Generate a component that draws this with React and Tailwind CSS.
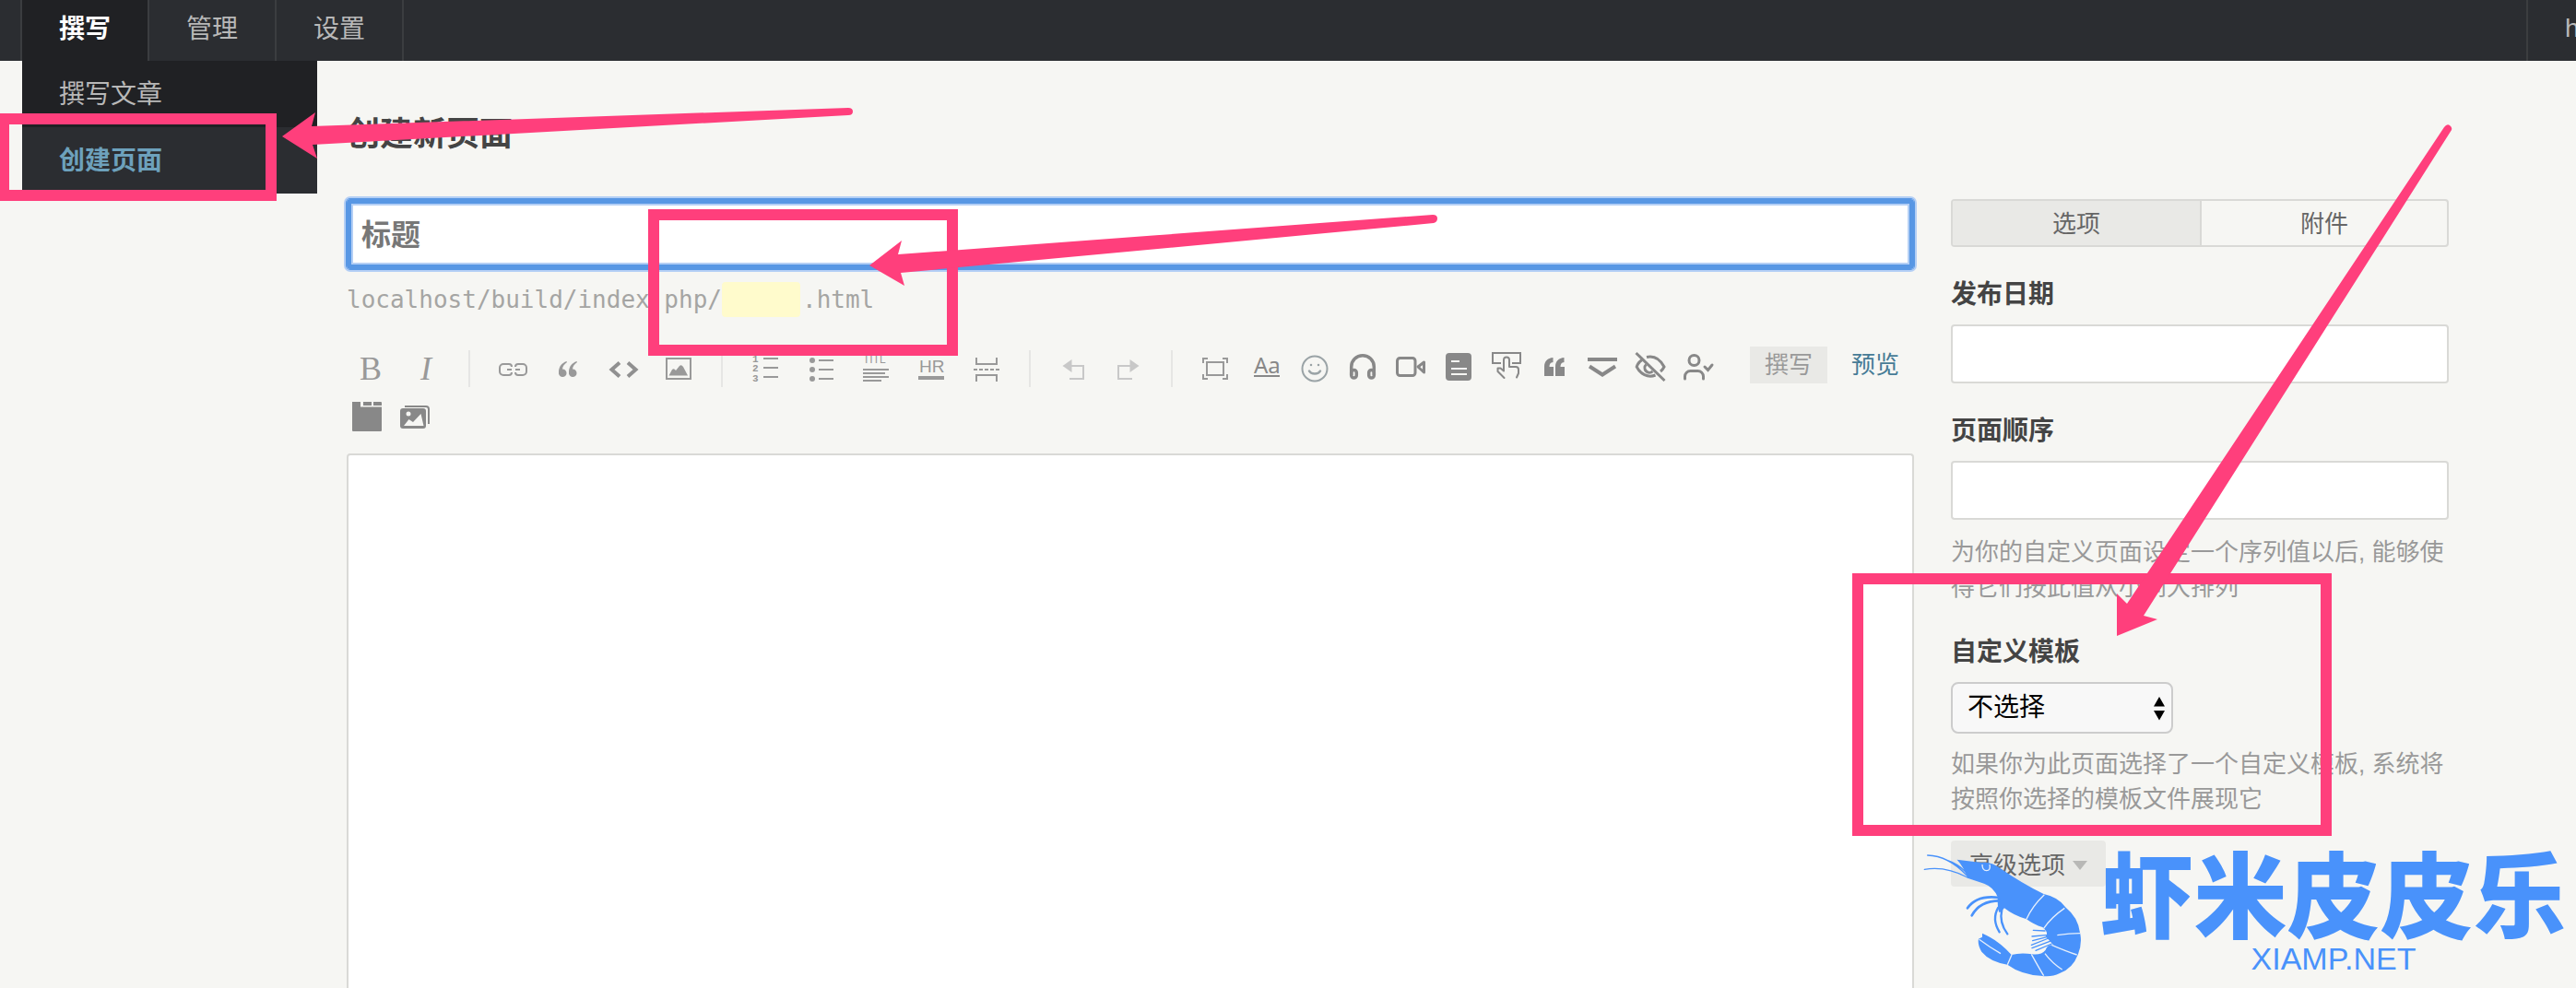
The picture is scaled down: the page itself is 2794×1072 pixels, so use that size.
import React from "react";

const fontBase = "font-['Liberation_Sans','Noto_Sans_CJK_SC',sans-serif]";

function Icon({ children, color = "#888" }) {
  return (
    <svg
      width="32"
      height="32"
      viewBox="0 0 32 32"
      className="overflow-visible"
      fill="none"
      stroke={color}
      strokeWidth="2"
      aria-hidden="true"
    >
      {children}
    </svg>
  );
}

function Tool({ label, wide, children }) {
  return (
    <button
      type="button"
      aria-label={label}
      className={
        (wide ? "w-[60px]" : "w-[52px]") +
        " flex h-[52px] shrink-0 items-center justify-center text-[#999]"
      }
    >
      {children}
    </button>
  );
}

function Spacer() {
  return (
    <span className="flex h-[52px] w-[34px] shrink-0 items-center justify-center">
      <span className="h-10 w-0.5 bg-[#e6e6e4]" />
    </span>
  );
}

function Toolbar() {
  return (
    <div className="-ml-1 flex flex-wrap" role="toolbar" aria-label="编辑工具">
      <Tool label="加粗" wide>
        <span className="font-['Liberation_Serif',serif] text-[36px] leading-none">B</span>
      </Tool>
      <Tool label="斜体" wide>
        <span className="font-['Liberation_Serif',serif] text-[36px] leading-none italic">I</span>
      </Tool>
      <Spacer />
      <Tool label="链接" wide>
        <Icon color="#999">
          <path d="M15 14a3 3 0 0 0-3-3H6a4 4 0 0 0-4 4v4a4 4 0 0 0 4 4h6a3 3 0 0 0 3-3M19 14a3 3 0 0 1 3-3h5a4 4 0 0 1 4 4v4a4 4 0 0 1-4 4h-5a3 3 0 0 1-3-3M10 17h5M19 17h5" />
        </Icon>
      </Tool>
      <Tool label="引用" wide>
        <Icon color="#999">
          <g fill="#999" stroke="none">
            <path d="M6 20C6 14 9 10 14.500 8l.5 1c-3 2-5 5-5 7.500a4.300 4.300 0 1 1-4 3.500z" />
            <path d="M17 20c0-6 3-10 8.500-12l.5 1c-3 2-5 5-5 7.500a4.300 4.300 0 1 1-4 3.500z" />
          </g>
        </Icon>
      </Tool>
      <Tool label="代码" wide>
        <Icon color="#909090">
          <path strokeWidth="4" d="M12 9.500 3.500 17l8.500 7.500M21 9.500l8.500 7.500-8.500 7.500" />
        </Icon>
      </Tool>
      <Tool label="图片" wide>
        <Icon color="#999">
          <path d="M3 5h26v22H3z" />
          <path fill="#999" stroke="none" d="M5.500 23.500 9 17q2-2 4 1l4-5q2-2 4 1l5 9.500z" />
        </Icon>
      </Tool>
      <Spacer />
      <Tool label="数字列表" wide>
        <Icon color="#999">
          <path d="M14 5h16M14 15h16M14 25h16" />
          <g
            fill="#999"
            stroke="none"
            fontSize="11"
            fontWeight="700"
            fontFamily="Liberation Mono, monospace"
          >
            <text x="2" y="9">1</text>
            <text x="2" y="19">2</text>
            <text x="2" y="30">3</text>
          </g>
        </Icon>
      </Tool>
      <Tool label="普通列表" wide>
        <Icon color="#999">
          <path d="M14 7h16M14 17h16M14 27h16" />
          <g fill="#999" stroke="none">
            <circle cx="7" cy="7" r="3" />
            <circle cx="7" cy="17" r="3" />
            <circle cx="7" cy="27" r="3" />
          </g>
        </Icon>
      </Tool>
      <Tool label="标题" wide>
        <Icon color="#999">
          <path d="M2 17h28M2 21h24M2 25h28M2 29h20" />
          <text x="2" y="10" fill="#999" stroke="none" fontSize="12" fontFamily="Liberation Sans, sans-serif">
            TITL
          </text>
        </Icon>
      </Tool>
      <Tool label="分割线" wide>
        <Icon color="#999">
          <text x="3" y="20" fill="#999" stroke="none" fontSize="19" fontFamily="Liberation Sans, sans-serif">
            HR
          </text>
          <path strokeWidth="4" d="M2 26h28" />
        </Icon>
      </Tool>
      <Tool label="摘要分割线" wide>
        <Icon color="#999">
          <path d="M5 4v7h22V4M5 30v-7h22v7" />
          <path strokeDasharray="4 2" d="M2 17h28" />
        </Icon>
      </Tool>
      <Spacer />
      <Tool label="撤销" wide>
        <Icon color="#c8c8c8">
          <path d="M14 13h13v14H12" />
          <path fill="#c8c8c8" stroke="none" d="m4.500 13 10-7v14z" />
        </Icon>
      </Tool>
      <Tool label="重做" wide>
        <Icon color="#c8c8c8">
          <path d="M18 13H5v14h15" />
          <path fill="#c8c8c8" stroke="none" d="m27.500 13-10-7v14z" />
        </Icon>
      </Tool>
      <Spacer />
      <Tool label="全屏" wide>
        <Icon color="#999">
          <path d="M3 10V5h5M24 5h5v5M29 22v5h-5M8 27H3v-5M7 9h18v14H7z" />
        </Icon>
      </Tool>
      <Tool label="字体">
        <Icon>
          <text x="2" y="21" fill="#888" stroke="none" fontSize="24" fontFamily="Noto Sans, sans-serif">
            Aa
          </text>
          <path d="M2 24h28" />
        </Icon>
      </Tool>
      <Tool label="表情">
        <Icon color="#9aa3a6">
          <circle cx="16" cy="16" r="13.500" />
          <path strokeWidth="2.500" strokeLinecap="round" d="M10 18.500c2 4 10 4 12 0M12 12v.1M20 12v.1" />
        </Icon>
      </Tool>
      <Tool label="音频">
        <Icon>
          <g strokeWidth="3.500">
            <path d="M3.700 23v-9a12.200 12.200 0 0 1 24.600 0v9" />
            <rect x="3.700" y="17.500" width="5.600" height="8.500" rx="2.800" />
            <rect x="22.700" y="17.500" width="5.600" height="8.500" rx="2.800" />
          </g>
        </Icon>
      </Tool>
      <Tool label="视频">
        <Icon>
          <g strokeWidth="3" strokeLinejoin="round">
            <rect x="1.500" y="4.500" width="19.500" height="19" rx="3" />
            <path d="m24 14 6.500-5v11z" />
          </g>
        </Icon>
      </Tool>
      <Tool label="文档">
        <Icon>
          <rect x="2" y="-1" width="28" height="30" rx="4" fill="#888" stroke="none" />
          <path stroke="#f6f6f3" d="M8 8h9M8 16h17M8 22h17" />
        </Icon>
      </Tool>
      <Tool label="按钮">
        <Icon>
          <path d="M10 10H1V-1h30v11h-9" />
          <path
            strokeLinejoin="round"
            strokeLinecap="round"
            d="m13.500 26-7-7v-3.500h3l3.500 3V6.500a3 3 0 0 1 6 0V14h7a3 3 0 0 1 3 3v4l-2 4.500"
          />
        </Icon>
      </Tool>
      <Tool label="引语">
        <Icon>
          <g fill="#888" stroke="none">
            <path d="M5 24V14C5 8 8.500 4.500 14.500 4v5c-3 .5-4 2-4 5H15v10z" />
            <path d="M17 24V14c0-6 3.500-9.500 9.500-10v5c-3 .5-4 2-4 5H27v10z" />
          </g>
        </Icon>
      </Tool>
      <Tool label="折叠">
        <Icon>
          <path strokeWidth="4" d="M0 6h32M2 13.500 16 22.500l14-9" />
        </Icon>
      </Tool>
      <Tool label="隐藏">
        <Icon>
          <g strokeWidth="3">
            <path d="m.5-1 31 30" />
            <path d="M12 3.500c9-2 15 3 19 10.500-1 2-2 3.500-4 5M7 6.500C4 8.500 2 11.500 1.200 14c3.800 7.500 12 12.500 20.300 9" />
            <path d="M11.500 11.500a5 5 0 0 0 7 7.300" />
          </g>
        </Icon>
      </Tool>
      <Tool label="可见">
        <Icon>
          <g strokeWidth="3" strokeLinecap="round">
            <circle cx="11.500" cy="7" r="5.500" />
            <path d="M1.500 27v-2.500a6 6 0 0 1 6-6h8a6 6 0 0 1 6 6V27M23 14l3.500 3.500L31 12" />
          </g>
        </Icon>
      </Tool>
      <Tool label="标签页">
        <Icon>
          <path fill="#888" stroke="none" d="M0 0h9v5.500h23V31q0 1-1 1H1q-1 0-1-1zM12 0h9v4h-9zM23 0h8q1 0 1 1v3h-9z" />
        </Icon>
      </Tool>
      <Tool label="相册">
        <Icon>
          <path d="M5 5h23q3 0 3 3v16" />
          <rect x="0" y="7" width="28" height="22" rx="3" fill="#888" stroke="none" />
          <circle cx="9" cy="13" r="2.500" fill="#f6f6f3" stroke="none" />
          <path fill="#f6f6f3" stroke="none" d="m4 26 5.500-7 4.500 3 8.500-9 3 13z" />
        </Icon>
      </Tool>
    </div>
  );
}

function Annotations() {
  return (
    <svg
      className="pointer-events-none absolute inset-0 h-full w-full"
      fill="none"
      stroke="#ff3f7c"
      strokeWidth="12"
      aria-hidden="true"
    >
      <rect x="4" y="129" width="290" height="83" />
      <rect x="709" y="233" width="324" height="147" />
      <rect x="2015" y="628" width="508" height="273" />
      <g fill="#ff3f7c" stroke="none">
        <path d="M306 148 342 122 338 137 920 117Q925 117 925 121T920 125L339 157 344 172Z" />
        <path d="M943 288 978 261 974 276 1554 233Q1559 233 1559 237T1555 242L977 296 981 310Z" />
        <path d="M2296 690V644L2307 655 2651 138Q2654 134 2657 136T2659 141L2325 668 2340 672Z" />
      </g>
    </svg>
  );
}

function Shrimp() {
  return (
    <svg width="208" height="162" viewBox="0 0 624 486" className="shrink-0" aria-hidden="true" fill="none">
      <path
        fill="#4992fb"
        d="M158 68 238 78Q268 74 298 96 370 146 440 180 488 190 512 224 552 256 558 306 566 340 552 376 534 424 492 438 464 452 430 446 366 442 322 410 264 400 238 368 224 344 228 326L240 320V308Q292 330 335 378 366 370 402 376 432 380 446 362 450 346 470 344L446 318Q458 306 436 288 408 280 384 262 342 250 312 226L300 238Q290 250 290 190 278 158 246 146L192 128Q180 92 158 68Z"
      />
      <g stroke="#4992fb" strokeWidth="4" strokeLinecap="round">
        <path d="M188 118Q130 56 62 54M192 126Q120 88 52 100M186 108Q160 82 130 72" />
        <path strokeWidth="8" d="M296 192Q222 182 192 226M296 202Q232 202 206 250" />
        <path strokeWidth="7" d="M292 224Q270 262 296 304M304 230Q294 272 322 310" />
        <path d="M406 298 444 300M402 318 448 314M404 332 450 320M400 346 456 324M402 356 460 334M414 364 466 342" />
      </g>
      <g stroke="#e6effb" strokeWidth="4">
        <path d="M442 182Q402 220 384 262M508 226Q464 256 440 292M558 308Q524 308 484 314M548 378Q512 366 466 346M500 426Q468 406 444 374M440 446Q422 416 400 376M322 410Q330 392 336 378M230 328Q262 352 300 374" />
        <path d="M240 84q0 20 14 20t10-20" />
      </g>
    </svg>
  );
}

function Watermark() {
  return (
    <div className="pointer-events-none absolute right-0 bottom-0 flex w-[724px] text-[#4992fb]">
      <Shrimp />
      <div className="flex flex-1 flex-col items-center pr-2.5 whitespace-nowrap">
        <div className="mt-1 text-[101px] leading-[104px] font-black font-['Noto_Sans_CJK_SC',sans-serif]">
          虾米皮皮乐
        </div>
        <div className="text-[34px] leading-[44px]">XIAMP.NET</div>
      </div>
    </div>
  );
}

function Field({ id, label }) {
  return (
    <div className="flex flex-col">
      <label htmlFor={id} className="mb-3 text-[28px] leading-10 font-bold text-[#444]">
        {label}
      </label>
      <input
        id={id}
        type="text"
        className="h-16 rounded border-2 border-[#d9d9d6] bg-white px-3 text-[28px]"
      />
    </div>
  );
}

export default function App() {
  return (
    <div
      className={
        fontBase + " relative flex h-screen flex-col overflow-hidden bg-[#f6f6f3] text-[#444]"
      }
    >
      <header className="flex h-[66px] shrink-0 justify-between bg-[#2b2d31] text-[28px] text-[#b8b8b8]">
        <nav className="relative ml-[22px] flex leading-[64px]">
          <a href="#write" className="border-l-2 border-[#3b3d40] bg-[#202124] px-10 font-bold text-white">
            撰写
          </a>
          <a href="#manage" className="border-l-2 border-[#3b3d40] px-10">管理</a>
          <a href="#options" className="border-x-2 border-[#3b3d40] px-10">设置</a>
          <div className="absolute top-[66px] left-0.5 flex w-80 flex-col bg-[#202124] leading-[70px]">
            <a href="#post" className="px-10 pt-0.5">撰写文章</a>
            <a href="#page" className="bg-[#2b2d31] px-10 pt-0.5 font-bold text-[#6da1bc]">创建页面</a>
          </div>
        </nav>
        <a href="#profile" className="w-[54px] overflow-hidden border-l-2 border-[#3b3d40] pl-10 leading-[62px]">
          h
        </a>
      </header>

      <main className="flex min-h-0 flex-1 flex-col pt-14 pr-[138px] pl-[376px]">
        <h2 className="mb-[46px] text-[36px] leading-[48px] font-bold">创建新页面</h2>
        <div className="grid min-h-0 flex-1 grid-cols-[1fr_540px] gap-10">
          <section className="flex min-h-0 flex-col">
            <input
              type="text"
              aria-label="标题"
              placeholder="标题"
              className="h-[76px] shrink-0 rounded-sm bg-white px-4 pt-0.5 text-[32px] font-bold shadow-[0_0_0_1px_#5897e4,0_0_0_3px_#b4cff5,inset_0_0_0_5px_#5897e4,inset_0_0_0_7px_#b4cff5] outline-none placeholder:text-[#777]"
            />
            <div className="mt-[14px] flex h-[38px] shrink-0 items-center font-['DejaVu_Sans_Mono',monospace] text-[26px] leading-[38px] text-[#a5a5a3]">
              <span>localhost/build/index.php/</span>
              <input
                type="text"
                aria-label="页面地址"
                className="mr-0.5 h-[38px] w-[85px] rounded-sm bg-[#fffbcc]"
              />
              <span>.html</span>
            </div>
            <div className="mt-[30px] flex shrink-0 items-start justify-between">
              <Toolbar />
              <div className="mt-0.5 flex shrink-0 gap-2.5 text-[26px] leading-[38px]">
                <button type="button" className="h-10 bg-[#e9e9e6] px-4 text-[#999]">撰写</button>
                <button type="button" className="h-10 px-4 text-[#467b96]">预览</button>
              </div>
            </div>
            <textarea
              aria-label="页面内容"
              className="mt-[14px] min-h-0 flex-1 resize-none rounded-t border-2 border-b-0 border-[#d9d9d6] bg-white"
            />
          </section>

          <aside className="flex min-w-0 flex-col">
            <div className="grid h-[52px] shrink-0 grid-cols-2 overflow-hidden rounded border-2 border-[#d9d9d6] text-[26px] text-[#666]">
              <button type="button" className="bg-[#e9e9e6] pt-0.5">选项</button>
              <button type="button" className="border-l-2 border-[#d9d9d6] pt-0.5">附件</button>
            </div>
            <div className="mt-8">
              <Field id="date" label="发布日期" />
            </div>
            <div className="mt-8">
              <Field id="order" label="页面顺序" />
            </div>
            <p className="mt-4 text-[26px] leading-[38px] text-[#999]">
              为你的自定义页面设定一个序列值以后, 能够使得它们按此值从小到大排列
            </p>
            <label htmlFor="template" className="mt-8 mb-3 text-[28px] leading-10 font-bold">
              自定义模板
            </label>
            <div className="relative h-14 w-[241px] shrink-0">
              <select
                id="template"
                className="h-full w-full appearance-none rounded-lg border-2 border-[#ccc] bg-[#f8f8f8] px-4 text-[28px] leading-[48px] text-black"
              >
                <option>不选择</option>
              </select>
              <svg
                className="pointer-events-none absolute top-4 right-2"
                width="14"
                height="26"
                viewBox="0 0 14 26"
                aria-hidden="true"
              >
                <path d="M7 0 13 10.500H1zM7 25.500 1 15h12z" />
              </svg>
            </div>
            <p className="mt-3.5 text-[26px] leading-[38px] text-[#999]">
              如果你为此页面选择了一个自定义模板, 系统将按照你选择的模板文件展现它
            </p>
            <button
              type="button"
              className="mt-[26px] flex h-[50px] w-[168px] shrink-0 items-center gap-2 rounded bg-[#e9e9e6] pt-1 pl-5 text-[26px] text-[#666]"
            >
              高级选项
              <svg width="16" height="10" viewBox="0 0 16 10" fill="#b8b8b6" aria-hidden="true">
                <path d="M0 0h16L8 10z" />
              </svg>
            </button>
          </aside>
        </div>
      </main>

      <Annotations />
      <Watermark />
    </div>
  );
}
